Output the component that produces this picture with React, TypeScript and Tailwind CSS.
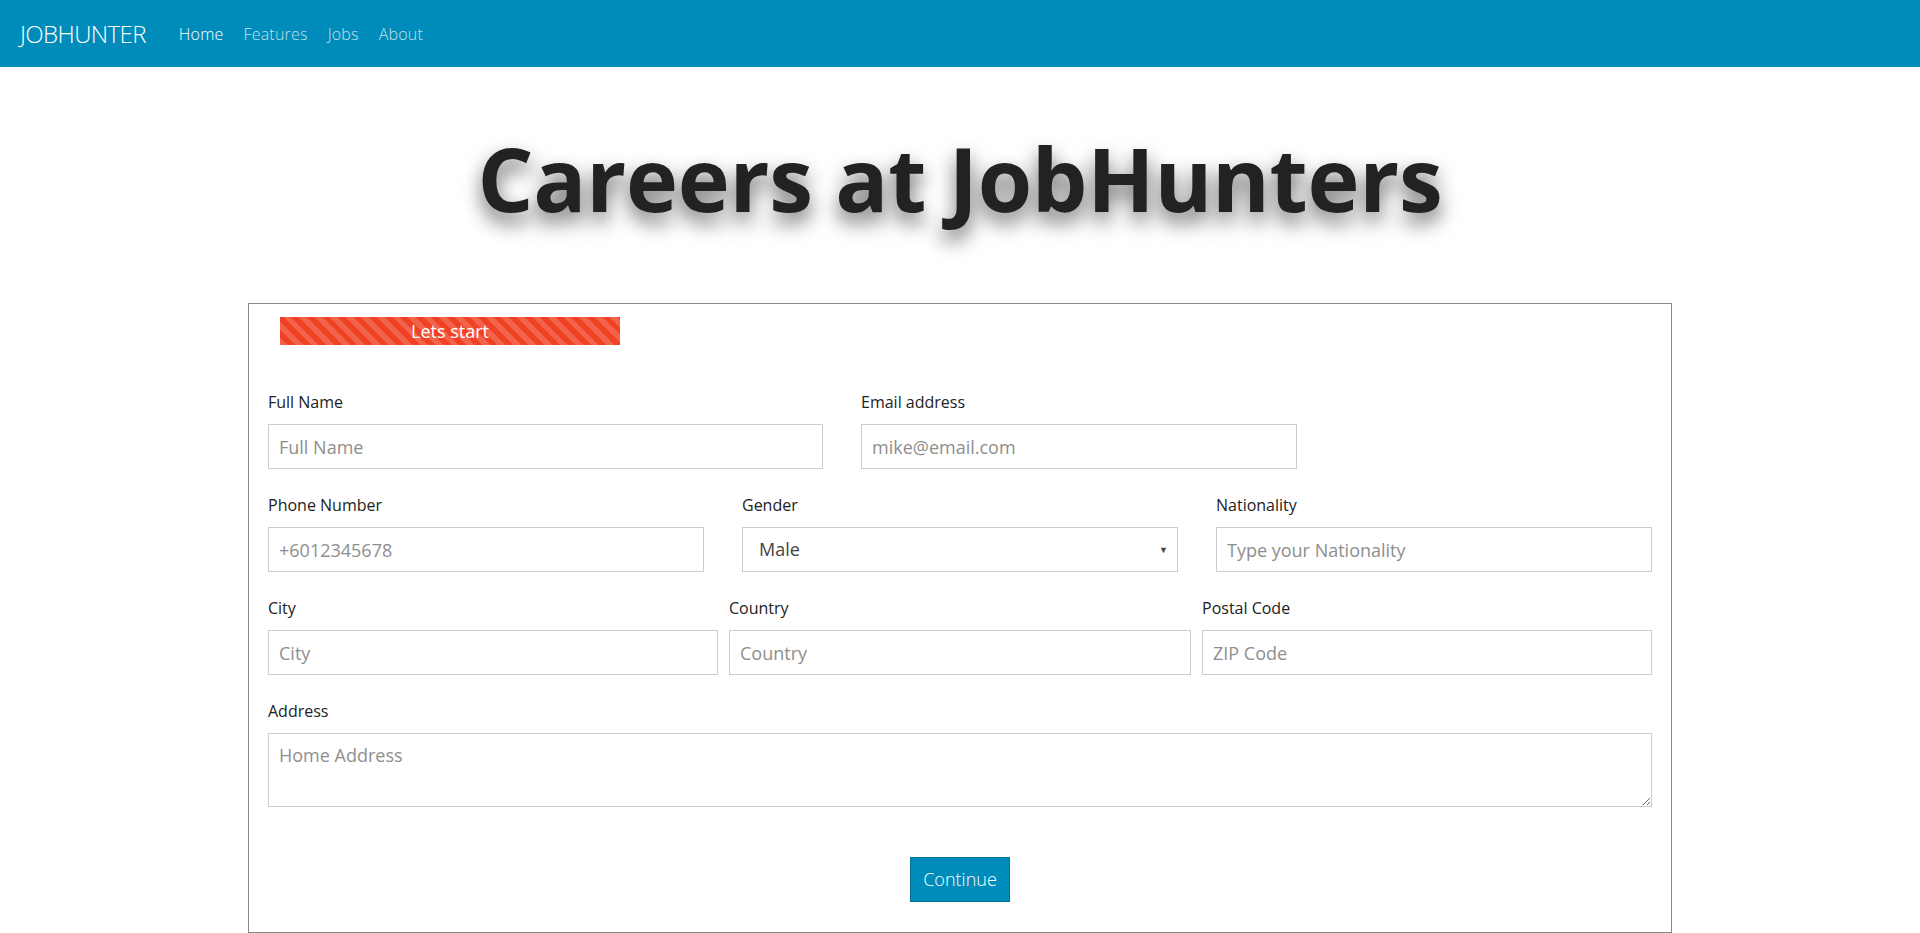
import React from "react";

const font = { fontFamily: '"Open Sans", "Liberation Sans", sans-serif' };

function Field({
  label,
  placeholder,
  type = "text",
}: {
  label: string;
  placeholder: string;
  type?: string;
}) {
  return (
    <div className="flex flex-col">
      <label className="mb-[10px] text-[16px] leading-[24px] text-[#222]">{label}</label>
      <input
        type={type}
        placeholder={placeholder}
        className="h-[45px] w-full border border-[#ccc] bg-white px-[10px] text-[18px] text-[#333] outline-none placeholder:text-[#8e8e8e]"
      />
    </div>
  );
}

export default function App() {
  return (
    <div className="min-h-screen bg-white" style={font}>
      {/* Top bar */}
      <nav className="flex h-[67px] items-center bg-[#008cba] px-[20px]">
        <a className="text-[24px] font-light tracking-tight text-white">JOBHUNTER</a>
        <ul className="ml-[33px] flex items-center gap-[20px] text-[16px] font-light tracking-[0.2px]">
          <li className="text-white">Home</li>
          <li className="text-white/75">Features</li>
          <li className="text-white/75">Jobs</li>
          <li className="text-white/75">About</li>
        </ul>
      </nav>

      <h1 className="mt-[67px] text-center text-[88px] font-bold leading-none tracking-[-0.25px] text-[#222] [text-shadow:0_10px_20px_rgba(0,0,0,0.6)]">
        Careers at JobHunters
      </h1>

      {/* Form card */}
      <div className="mx-auto mt-[81px] w-[1424px] border border-[#888] px-[19px] pb-[30px] pt-[13px]">
        <div className="ml-[12px] h-[28px] w-[340px] bg-[#f04124] bg-[repeating-linear-gradient(45deg,rgba(255,255,255,0.18)_0_5.5px,transparent_5.5px_11px)] text-center text-[18px] leading-[28px] text-white">
          Lets start
        </div>

        <form className="mt-[45px] flex flex-col gap-[24px]">
          <div className="grid grid-cols-[555px_436px] gap-x-[38px]">
            <Field label="Full Name" placeholder="Full Name" />
            <Field label="Email address" placeholder="mike@email.com" type="email" />
          </div>

          <div className="grid grid-cols-3 gap-x-[38px]">
            <Field label="Phone Number" placeholder="+6012345678" />
            <div className="flex flex-col">
              <label className="mb-[10px] text-[16px] leading-[24px] text-[#222]">Gender</label>
              <div className="relative">
                <select className="h-[45px] w-full appearance-none border border-[#ccc] bg-white pl-[16px] text-[18px] text-[#444] outline-none">
                  <option>Male</option>
                  <option>Female</option>
                </select>
                <span className="pointer-events-none absolute right-[10px] top-1/2 -translate-y-1/2 text-[9px] text-[#444]">▼</span>
              </div>
            </div>
            <Field label="Nationality" placeholder="Type your Nationality" />
          </div>

          <div className="grid grid-cols-[450px_462px_450px] gap-x-[11px]">
            <Field label="City" placeholder="City" />
            <Field label="Country" placeholder="Country" />
            <Field label="Postal Code" placeholder="ZIP Code" />
          </div>

          <div className="flex flex-col">
            <label className="mb-[10px] text-[16px] leading-[24px] text-[#222]">Address</label>
            <textarea
              placeholder="Home Address"
              className="h-[74px] w-full border border-[#ccc] bg-white px-[10px] py-[8px] text-[18px] leading-[27px] text-[#333] outline-none placeholder:text-[#8e8e8e]"
            />
          </div>

          <div className="mt-[26px] flex justify-center">
            <button
              type="button"
              className="h-[45px] w-[100px] border border-[#007095] bg-[#008cba] text-[18px] font-light text-white"
            >
              Continue
            </button>
          </div>
        </form>
      </div>
    </div>
  );
}
